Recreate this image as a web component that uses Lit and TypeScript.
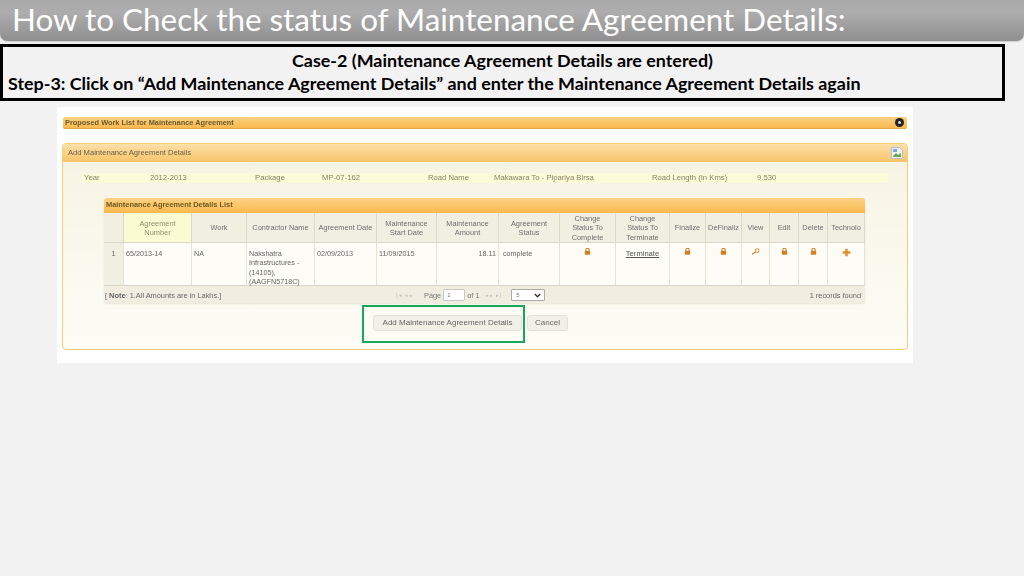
import { LitElement, html, css } from "lit";
import { customElement } from "lit/decorators.js";

const lock = html`<svg class="ico" viewBox="0 0 6 6"><path d="M1.6 2.6V1.6a1.4 1.4 0 0 1 2.8 0v1" fill="none" stroke="#c9822a" stroke-width=".9"/><rect x=".7" y="2.3" width="4.6" height="3.5" rx=".6" fill="#d07f22"/></svg>`;
const glass = html`<svg class="ico glass" viewBox="0 0 8 6"><circle cx="5.4" cy="2.2" r="1.7" fill="none" stroke="#d6912f" stroke-width=".9"/><path d="M4 3.4 1 5.4" stroke="#c9822a" stroke-width="1.1"/></svg>`;
const plus = html`<svg class="ico plus" viewBox="0 0 8 8"><path d="M4 .6v6.8M.6 4h6.8" stroke="#d9922e" stroke-width="2.2"/></svg>`;

const heads: [string, string?][] = [
  [""],
  ["Agreement<br>Number", "hl"],
  ["Work"],
  ["Contractor Name"],
  ["Agreement Date"],
  ["Maintenance<br>Start Date"],
  ["Maintenance<br>Amount"],
  ["Agreement<br>Status"],
  ["Change<br>Status To<br>Complete"],
  ["Change<br>Status To<br>Terminate"],
  ["Finalize"],
  ["DeFinaliz"],
  ["View"],
  ["Edit"],
  ["Delete"],
  ["Technolo"],
];

@customElement("app-root")
export class AppRoot extends LitElement {
  static styles = css`
    :host { display: block; width: 1024px; height: 576px; background: #f2f2f2; overflow: hidden; font-family: "Liberation Sans", Arial, sans-serif; }
    .title { height: 41px; box-sizing: border-box; background: linear-gradient(#a9a9a9, #adadad 30%, #8f8f8f); border-radius: 0 0 7px 7px; color: #fff; font: 31.4px/39px Lato, sans-serif; padding-left: 12px; white-space: nowrap; box-shadow: 0 1px 1px #cfcfcf; }
    .box { margin-top: 3px; width: 1005px; height: 57px; box-sizing: border-box; border: 3px solid #000; padding-top: 2px; font: bold 17.9px/23px Lato, sans-serif; color: #000; white-space: nowrap; }
    .box .c { text-align: center; }
    .box .l { padding-left: 5px; }
    .shot { position: relative; margin: 6px 0 0 57px; width: 856px; height: 256px; box-sizing: border-box; padding: 10px 5px 0 5px; background: #fff; color: #666; font-size: 7.4px; filter: blur(.45px); }
    .bar { background: linear-gradient(#fcd283, #f9b94f); }
    .top { height: 12px; border-radius: 2px; margin: 0 1px; display: flex; align-items: center; justify-content: space-between; padding: 0 3px 0 2px; font-weight: bold; color: #6b5a2c; font-size: 7.4px; border-bottom: 1px solid #e0a94f; box-sizing: border-box; }
    .dot { width: 9px; height: 9px; border-radius: 50%; background: #222; display: flex; align-items: center; justify-content: center; }
    .dot i { width: 3px; height: 3px; border-radius: 50%; background: #ddd; }
    .panel { margin-top: 14px; height: 207px; box-sizing: border-box; border: 1px solid #f7cf73; border-radius: 4px; background: linear-gradient(#f6f3e3, #fbf9ef 60%, #fdfcf6); display: flex; flex-direction: column; }
    .phead { height: 18px; flex: none; border-radius: 3px 3px 0 0; background: linear-gradient(#fbe0aa, #f9c468); display: flex; align-items: center; justify-content: space-between; padding: 0 4px 1px 5px; font-size: 7.6px; color: #6b6048; box-sizing: border-box; }
    .broken { width: 12px; height: 12px; }
    .info { margin: 11px 19px 0 18px; height: 10px; background: #fbfbd8; display: grid; grid-template-columns: 69px 105px 67px 106px 66px 158px 105px 1fr; align-items: center; color: #8a8468; font-size: 7.7px; line-height: 10px; white-space: nowrap; }
    .info span:first-child { padding-left: 3px; }
    .wrap { margin: 15px 0 0 41px; width: 761px; background: #f1eee1; border-radius: 3px; flex: none; box-shadow: 0 1px 2px #e8e5d6; }
    .lhead { height: 15px; border-radius: 3px 3px 0 0; font-weight: bold; color: #6e5a22; font-size: 7.4px; line-height: 13px; padding-left: 2px; box-sizing: border-box; }
    .grid { display: grid; grid-template-columns: 20px 68px 55px 68px 62px 60px 62px 61px 56px 54px 36px 36px 28px 29px 29px 37px; }
    .th { height: 30px; padding-top: 1px; background: #f1eee2; border-right: 1px solid #dcd8c8; border-bottom: 1px solid #dcd8c8; box-sizing: border-box; display: flex; align-items: center; justify-content: center; text-align: center; line-height: 9.5px; color: #6f6f6f; font-size: 7.4px; white-space: nowrap; overflow: hidden; }
    .th.hl { background: #fbfbd2; color: #8f8f70; }
    .td { height: 43px; background: #fdfcf7; border-right: 1px solid #e6e2d4; border-bottom: 1px solid #d8d5c8; box-sizing: border-box; padding: 6px 2px 0 2px; line-height: 9.3px; color: #666; font-size: 7.2px; white-space: nowrap; }
    .td.n { background: #f1eee2; text-align: center; }
    .td.r { text-align: right; }
    .td.ic { text-align: center; padding-top: 5px; }
    .td.ic a { display: block; margin-top: 1px; color: #555; text-decoration: underline; font-size: 7.6px; }
    .ico { width: 7px; height: 7px; display: inline-block; vertical-align: top; }
    .glass { width: 9px; }
    .plus { width: 9px; height: 9px; }
    .foot { height: 17px; display: flex; align-items: center; padding: 1px 4px 0 1px; color: #666; font-size: 7.4px; box-sizing: border-box; }
    .count { margin-left: auto; }
    .pager { display: flex; align-items: center; gap: 2px; margin-left: 175px; color: #777; }
    .pager em { font-style: normal; color: #bbb; font-size: 5px; letter-spacing: 1px; margin: 0 9px 0 0; }
    .pager em.n { margin: 0 7px 0 4px; }
    .inp { width: 22px; height: 12px; border: 1px solid #c8c8c8; background: #fff; border-radius: 1px; font-size: 6px; line-height: 10px; padding-left: 3px; box-sizing: border-box; }
    .sel { width: 34px; height: 12px; border: 1px solid #aaa; background: #fff; border-radius: 1px; font-size: 6px; line-height: 9px; padding-left: 4px; box-sizing: border-box; display: flex; justify-content: space-between; align-items: center; padding-right: 3px; }
    .sel svg { width: 7px; height: 5px; }
    .btns { margin: 12px 0 0 310px; display: flex; gap: 5px; }
    .btn { height: 16px; border: 1px solid #e4e2d8; border-radius: 3px; background: #f1efe6; color: #666; font-size: 8px; line-height: 14px; text-align: center; box-sizing: border-box; }
    .b1 { width: 149px; }
    .b2 { width: 41px; }
    .green { position: absolute; left: 305px; top: 198px; width: 163px; height: 38px; box-sizing: border-box; border: 2px solid #16a85a; }
  `;

  render() {
    return html`
      <div class="title">How to Check the status of Maintenance Agreement Details:</div>
      <div class="box">
        <div class="c">Case-2 (Maintenance Agreement Details are entered)</div>
        <div class="l">Step-3: Click on “Add Maintenance Agreement Details” and enter the Maintenance Agreement Details again</div>
      </div>
      <div class="shot">
        <div class="top bar"><span>Proposed Work List for Maintenance Agreement</span><span class="dot"><i></i></span></div>
        <div class="panel">
          <div class="phead"><span>Add Maintenance Agreement Details</span>
            <svg class="broken" viewBox="0 0 12 12"><path d="M.5.5h8l3 3v8H.5z" fill="#eef3fb" stroke="#a9b4c6" stroke-width=".8"/><path d="M2 9l3-3 2 2 3-2v4H2z" fill="#6aa84f"/><path d="M2 2h4v3H2z" fill="#7da7e0"/></svg>
          </div>
          <div class="info">
            <span>Year</span><span>2012-2013</span><span>Package</span><span>MP-07-162</span><span>Road Name</span><span>Makawara To - Pipariya Birsa</span><span>Road Length (In Kms)</span><span>9.530</span>
          </div>
          <div class="wrap">
            <div class="lhead bar">Maintenance Agreement Details List</div>
            <div class="grid">
              ${heads.map(([t, c]) => html`<div class="th ${c ?? ""}">${t.split("<br>").map((p, i) => i ? html`<br>${p}` : p)}</div>`)}
              <div class="td n">1</div>
              <div class="td">65/2013-14</div>
              <div class="td">NA</div>
              <div class="td">Nakshatra<br>Infrastructures -<br>(14105),<br>(AAGFN5718C)</div>
              <div class="td">02/09/2013</div>
              <div class="td">11/09/2015</div>
              <div class="td r">18.11</div>
              <div class="td">&nbsp;complete</div>
              <div class="td ic">${lock}</div>
              <div class="td ic"><a>Terminate</a></div>
              <div class="td ic">${lock}</div>
              <div class="td ic">${lock}</div>
              <div class="td ic">${glass}</div>
              <div class="td ic">${lock}</div>
              <div class="td ic">${lock}</div>
              <div class="td ic">${plus}</div>
            </div>
            <div class="foot">
              <span>[ <b>Note</b>: 1.All Amounts are in Lakhs.]</span>
              <span class="pager"><em>|◂ ◂◂</em> Page <span class="inp">1</span> of 1 <em class="n">▸▸ ▸|</em>
                <span class="sel">5<svg viewBox="0 0 6 4"><path d="M.7.7 3 3l2.3-2.3" fill="none" stroke="#333" stroke-width="1.2"/></svg></span></span>
              <span class="count">1 records found</span>
            </div>
          </div>
          <div class="btns"><div class="btn b1">Add Maintenance Agreement Details</div><div class="btn b2">Cancel</div></div>
        </div>
        <div class="green"></div>
      </div>
    `;
  }
}
